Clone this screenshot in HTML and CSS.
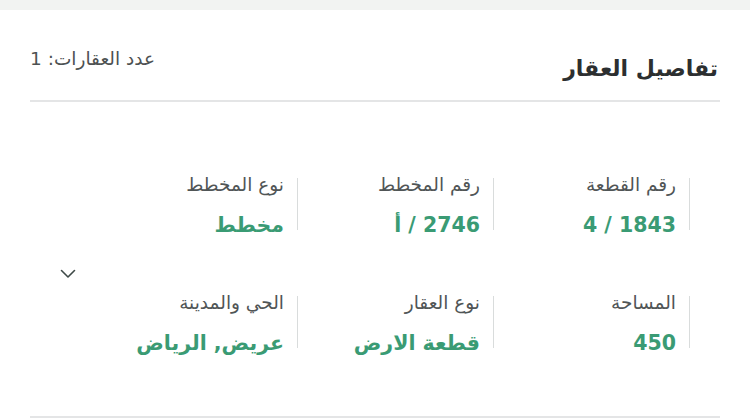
FILE: index.html
```html
<!DOCTYPE html>
<html lang="ar" dir="rtl">
<head>
<meta charset="utf-8">
<link rel="stylesheet" href="styles.css">
</head>
<body>
<div class="topband"></div>
<div class="card">
  <div class="header">
    <h1 class="title">تفاصيل العقار</h1>
    <div class="count">عدد العقارات: 1</div>
  </div>
  <div class="divider"></div>
  <div class="body">
    <div class="grid">
      <div class="item"><div class="label">رقم القطعة</div><div class="value">1843 / 4</div></div>
      <div class="item"><div class="label">رقم المخطط</div><div class="value">2746 / أ</div></div>
      <div class="item"><div class="label">نوع المخطط</div><div class="value">مخطط</div></div>
      <div class="item"><div class="label">المساحة</div><div class="value">450</div></div>
      <div class="item"><div class="label">نوع العقار</div><div class="value">قطعة الارض</div></div>
      <div class="item"><div class="label">الحي والمدينة</div><div class="value">عريض, الرياض</div></div>
    </div>
    <div class="chev">
      <svg width="16" height="10" viewBox="0 0 16 10"><path d="M1.5 1.5 L8 8 L14.5 1.5" fill="none" stroke="#3f4a48" stroke-width="1.6" stroke-linecap="round" stroke-linejoin="round"/></svg>
    </div>
  </div>
  <div class="divider bottom"></div>
</div>
</body>
</html>
```

FILE: styles.css
```css
html, body {
  margin: 0;
  padding: 0;
  background: #ffffff;
  font-family: "DejaVu Sans", "Noto Sans", sans-serif;
}
.topband {
  height: 10px;
  background: #f2f3f2;
}
.card {
  background: #ffffff;
  padding: 0 30px;
}
.header {
  display: flex;
  justify-content: space-between;
  align-items: flex-start;
  padding: 37px 2px 0 0;
  height: 53px;
}
.title {
  margin: 9px 0 0 0;
  font-size: 22px;
  font-weight: 700;
  color: #2c2f30;
}
.count {
  font-size: 18.5px;
  color: #4d5152;
  margin-top: 1px;
}
.divider {
  height: 2px;
  background: #e4e5e6;
}
.body {
  display: flex;
  align-items: flex-start;
  padding: 76px 30px 0 0;
  height: 238px;
}
.grid {
  display: grid;
  grid-template-columns: repeat(3, 196px);
  row-gap: 66px;
}
.item {
  border-right: 1px solid #d9dcdc;
  padding-right: 13px;
  height: 52px;
  display: flex;
  flex-direction: column;
  justify-content: space-between;
}
.label {
  font-size: 18.5px;
  color: #505556;
  line-height: 20px;
  margin-top: -3px;
}
.value {
  font-size: 20.5px;
  font-weight: 700;
  color: #3a9b74;
  line-height: 24px;
  margin-bottom: -7px;
}
.chev {
  margin-right: 26px;
  margin-top: 86px;
  width: 16px;
  height: 10px;
}
.bottom {
  margin-top: 0;
}
```
